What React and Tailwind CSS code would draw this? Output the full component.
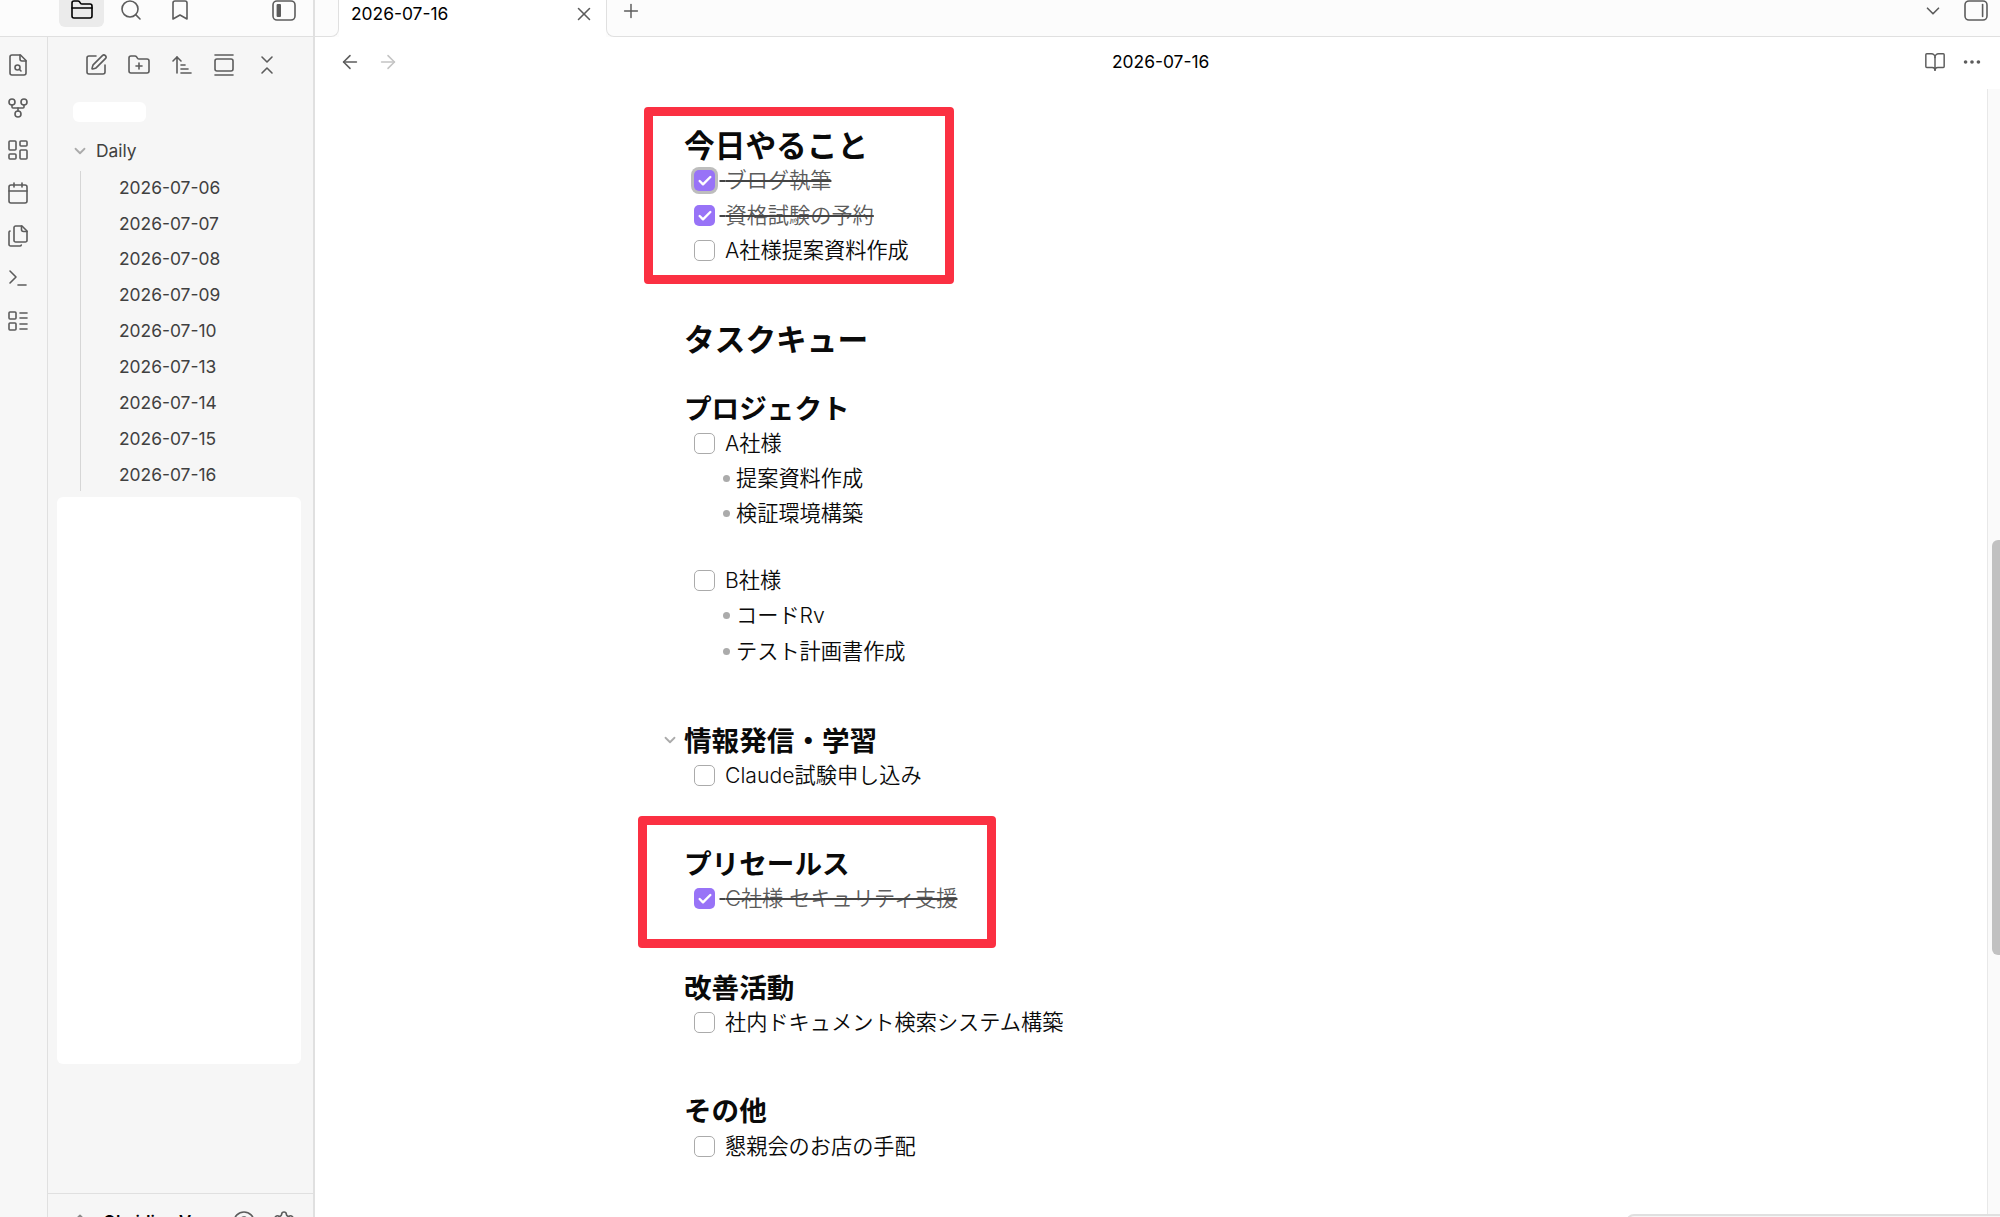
import React from 'react';
import {
  ArrowLeft, ArrowRight, ArrowUpNarrowWide, BookOpen, Bookmark, Calendar, Check, ChevronDown,
  ChevronsDownUp, ChevronsUpDown, CircleHelp, Ellipsis, FolderClosed, FolderPlus, GalleryVertical,
  GitFork, LayoutDashboard, LayoutList, Plus, Search, Settings, SquarePen, Terminal, X,
} from 'lucide-react';

const days = ['06', '07', '08', '09', '10', '13', '14', '15', '16'];
const tools = [SquarePen, FolderPlus, ArrowUpNarrowWide, GalleryVertical, ChevronsDownUp];

function Svg({ children }) {
  return (
    <svg width="24" height="24" viewBox="0 0 24 24" fill="none" stroke="currentColor" strokeWidth="1.6" strokeLinecap="round" strokeLinejoin="round" className="shrink-0">
      {children}
    </svg>
  );
}

function FileSearchIcon() {
  return (
    <Svg>
      <path d="M14.5 2H6a2 2 0 0 0-2 2v16a2 2 0 0 0 2 2h12a2 2 0 0 0 2-2V7.5L14.5 2z" />
      <path d="M14 2v4a2 2 0 0 0 2 2h4" />
      <circle cx="11.5" cy="14.5" r="2.5" />
      <path d="M13.3 16.3 15 18" />
    </Svg>
  );
}

function FilesIcon() {
  return (
    <Svg>
      <path d="M15.5 2H9.6c-.4 0-.8.2-1.1.5-.3.3-.5.7-.5 1.1v12.8c0 .4.2.8.5 1.1.3.3.7.5 1.1.5h9.8c.4 0 .8-.2 1.1-.5.3-.3.5-.7.5-1.1V7L16 2z" />
      <path d="M15.5 2v3.5a2 2 0 0 0 2 2H21" />
      <path d="M4 7c-.6.2-1 .7-1 1.300v12.1c0 .4.2.8.5 1.1.3.3.7.5 1.100.5h9.400c.6 0 1.100-.4 1.300-1" />
    </Svg>
  );
}

function SidebarIcon({ right }) {
  return (
    <Svg>
      <rect x="1" y="2" width="22" height="19" rx="4" />
      {right ? <path d="M18.6 5.5v12" /> : <rect x="4.6" y="5" width="4.400" height="13" rx="1" fill="currentColor" stroke="none" />}
    </Svg>
  );
}

function TopBar() {
  return (
    <div className="flex h-[37px] shrink-0 bg-[#fcfcfc] text-[#5c5c5c]">
      <div className="flex w-[315px] shrink-0 items-start border-r-2 border-b border-[#e0e0e0] pl-[59px]">
        <div className="flex h-[27px] w-[45px] items-start justify-center rounded-b-md bg-[#ebebeb] text-black">
          <FolderClosed size={24} strokeWidth={1.6} className="-mt-[2px]" />
        </div>
        <Search size={24} strokeWidth={1.6} className="-mt-[2px] ml-[15px]" />
        <Bookmark size={24} strokeWidth={1.6} className="-mt-[2px] ml-[25px]" />
        <div className="-mt-[1px] ml-[80px]"><SidebarIcon /></div>
      </div>
      <div className="w-[24px] shrink-0 rounded-br-lg border-r border-b border-[#e0e0e0]" />
      <div className="flex w-[267px] shrink-0 items-start justify-between bg-white pr-[11px] pl-[12px]">
        <span className="text-[17.4px] leading-[28px] text-black">2026-07-16</span>
        <X size={22} strokeWidth={1.7} className="mt-[3px]" />
      </div>
      <div className="flex flex-1 items-start rounded-bl-lg border-b border-l border-[#e0e0e0] pl-[13px]">
        <Plus size={22} strokeWidth={1.6} />
        <ChevronDown size={22} strokeWidth={1.8} className="mr-[20px] ml-auto" />
        <div className="-mt-[1px] mr-[12px]"><SidebarIcon right /></div>
      </div>
    </div>
  );
}

function Ribbon() {
  return (
    <div className="flex w-[48px] shrink-0 flex-col gap-[18.7px] border-r border-[#e0e0e0] bg-[#f7f7f7] pt-[16px] pl-[6px] text-[#5c5c5c]">
      <FileSearchIcon />
      <GitFork size={24} strokeWidth={1.6} />
      <LayoutDashboard size={24} strokeWidth={1.6} />
      <Calendar size={24} strokeWidth={1.6} />
      <FilesIcon />
      <Terminal size={24} strokeWidth={1.6} />
      <LayoutList size={24} strokeWidth={1.6} />
    </div>
  );
}

function Sidebar() {
  return (
    <div className="flex w-[267px] shrink-0 flex-col border-r-2 border-[#e0e0e0] bg-[#f6f6f6] text-[17.4px] text-[#404040]">
      <div className="flex gap-[18.7px] pt-[16px] pl-[36.4px] text-[#5c5c5c]">
        {tools.map((Icon, i) => <Icon key={i} size={24} strokeWidth={1.6} />)}
      </div>
      <div className="mt-[25px] ml-[24.5px] h-[20px] w-[73px] rounded-md bg-white" />
      <div className="mt-[11px] flex h-[36px] items-center pl-[23px]">
        <ChevronDown size={18} strokeWidth={2.4} className="text-[#ababab]" />
        <span className="ml-[7px]">Daily</span>
      </div>
      <div className="mt-[2px] ml-[32px] h-[320px] border-l border-[#d6d6d6]">
        <div className="-mt-[1.2px]">
          {days.map(d => (
            <div key={d} className="flex h-[35.87px] items-center pl-[38px]">2026-07-{d}</div>
          ))}
        </div>
      </div>
      <div className="mt-[6px] ml-[9px] h-[567px] w-[244px] rounded-md bg-white" />
      <div className="mt-auto flex h-[24px] shrink-0 items-start overflow-hidden border-t border-[#e0e0e0] pl-[22px]">
        <ChevronsUpDown size={20} strokeWidth={2} className="mt-[18px] text-[#8a8a8a]" />
        <span className="mt-[17px] ml-[13px] w-[118px] text-[16.8px] font-semibold leading-[22px] text-black">Obsidian V</span>
        <CircleHelp size={24} strokeWidth={1.6} className="mt-[16px] ml-[11px] text-[#5c5c5c]" />
        <Settings size={24} strokeWidth={1.6} className="mt-[16px] ml-[16px] text-[#5c5c5c]" />
      </div>
    </div>
  );
}

function H2({ children }) {
  return <h2 className="-ml-px h-[36px] text-[30.7px] leading-[38px] font-bold">{children}</h2>;
}

function H3({ children }) {
  return <h3 className="-ml-px h-[35px] text-[27.6px] leading-[37px] font-bold">{children}</h3>;
}

function Task({ done, focus, children }) {
  return (
    <div className="flex h-[35.2px] items-center pl-[9px]">
      {done ? (
        <span className={focus ? 'flex size-[21px] items-center justify-center rounded-[5px] bg-[#9873f7] ring-[3px] ring-[#bdbdbd]' : 'flex size-[21px] items-center justify-center rounded-[5px] bg-[#9873f7]'}>
          <Check size={16} strokeWidth={3.6} className="text-white" />
        </span>
      ) : (
        <span className="size-[21px] rounded-[5px] border border-[#ababab] bg-white" />
      )}
      {done
        ? <span className="ml-[4.500px] whitespace-pre text-[#5c5c5c] line-through decoration-[#444]"> {children}</span>
        : <span className="ml-[10px]">{children}</span>}
    </div>
  );
}

function Bullet({ children }) {
  return (
    <div className="flex h-[35.2px] items-center pl-[37.5px]">
      <span className="size-[7px] rounded-full bg-[#ababab]" />
      <span className="ml-[6.500px]">{children}</span>
    </div>
  );
}

function Note() {
  return (
    <div className="flex flex-col pt-[38px] pl-[370px] text-[21.2px] leading-[35px] font-[350] text-[#0a0a0a]">
      <H2>今日やること</H2>
      <Task done focus>ブログ執筆</Task>
      <Task done>資格試験の予約</Task>
      <Task>A社様提案資料作成</Task>
      <div className="mt-[52px]"><H2>タスクキュー</H2></div>
      <div className="mt-[34px]"><H3>プロジェクト</H3></div>
      <Task>A社様</Task>
      <Bullet>提案資料作成</Bullet>
      <Bullet>検証環境構築</Bullet>
      <div className="mt-[32px]"><Task>B社様</Task></div>
      <Bullet>コードRv</Bullet>
      <Bullet>テスト計画書作成</Bullet>
      <div className="mt-[54px] -ml-[24px] flex items-center">
        <ChevronDown size={18} strokeWidth={2.4} className="mr-[6px] text-[#ababab]" />
        <H3>情報発信・学習</H3>
      </div>
      <Task>Claude試験申し込み</Task>
      <div className="mt-[53.4px]"><H3>プリセールス</H3></div>
      <Task done>C社様 セキュリティ支援</Task>
      <div className="mt-[53.4px]"><H3>改善活動</H3></div>
      <Task>社内ドキュメント検索システム構築</Task>
      <div className="mt-[53.4px]"><H3>その他</H3></div>
      <Task>懇親会のお店の手配</Task>
    </div>
  );
}

export default function App() {
  return (
    <div className="relative flex h-[1217px] w-[2000px] flex-col overflow-hidden bg-white font-['Inter','Noto_Sans_CJK_JP',sans-serif]">
      <TopBar />
      <div className="flex min-h-0 flex-1">
        <Ribbon />
        <Sidebar />
        <div className="flex min-w-0 flex-1 flex-col">
          <div className="flex h-[52px] shrink-0 items-start pt-[14px] text-[#5c5c5c]">
            <ArrowLeft size={22} strokeWidth={1.7} className="ml-[23.500px]" />
            <ArrowRight size={22} strokeWidth={1.7} className="ml-[16px] text-[#c4c4c4]" />
            <span className="flex-1 pl-[713.500px] text-[17.4px] leading-[22px] text-black">2026-07-16</span>
            <BookOpen size={22} strokeWidth={1.6} />
            <Ellipsis size={22} strokeWidth={2} className="mr-[17px] ml-[15px]" />
          </div>
          <div className="flex min-h-0 flex-1">
            <div className="-mt-[52px] flex-1 pt-[52px]"><Note /></div>
            <div className="flex w-[13px] shrink-0 justify-end border-l border-[#e8e8e8] bg-[#fafafa] pt-[450.500px]">
              <div className="h-[415px] w-[8px] rounded-l-[6px] bg-[#c1c1c1]" />
            </div>
          </div>
        </div>
      </div>
      {/* highlights drawn over the note */}
      <div className="absolute top-[106.500px] left-[643.500px] h-[177px] w-[310px] rounded-[4px] border-[9px] border-[#fb3042]" />
      <div className="absolute top-[816px] left-[638px] h-[132px] w-[358px] rounded-[4px] border-[9px] border-[#fb3042]" />
      {/* top edge of the status bar */}
      <div className="absolute top-[1214px] left-[1626px] h-[12px] w-[380px] rounded-tl-lg border-2 border-[#e0e0e0] bg-[#f6f6f6]" />
    </div>
  );
}
